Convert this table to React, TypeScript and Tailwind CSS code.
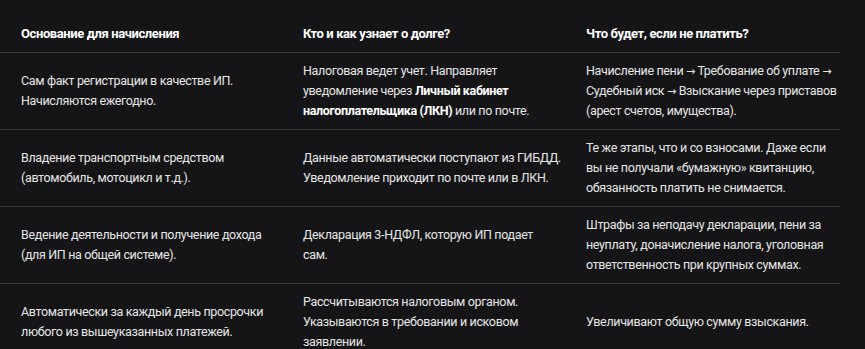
import { Fragment, type ReactNode } from "react";

type Row = { basis: ReactNode[]; who: ReactNode[]; result: ReactNode[] };

const Arrow = () => (
  <span className="font-['DejaVu_Sans',sans-serif] text-[11px] leading-none">→</span>
);

const rows: Row[] = [
  {
    basis: ["Сам факт регистрации в качестве ИП.", "Начисляются ежегодно."],
    who: [
      "Налоговая ведет учет. Направляет",
      <>
        уведомление через <b className="font-bold text-white">Личный кабинет</b>
      </>,
      <>
        <b className="font-bold text-white">налогоплательщика (ЛКН)</b> или по почте.
      </>,
    ],
    result: [
      <>
        Начисление пени <Arrow /> Требование об уплате <Arrow />
      </>,
      <>
        Судебный иск <Arrow /> Взыскание через приставов
      </>,
      "(арест счетов, имущества).",
    ],
  },
  {
    basis: ["Владение транспортным средством", "(автомобиль, мотоцикл и т.д.)."],
    who: ["Данные автоматически поступают из ГИБДД.", "Уведомление приходит по почте или в ЛКН."],
    result: [
      "Те же этапы, что и со взносами. Даже если",
      "вы не получали «бумажную» квитанцию,",
      "обязанность платить не снимается.",
    ],
  },
  {
    basis: ["Ведение деятельности и получение дохода", "(для ИП на общей системе)."],
    who: ["Декларация 3-НДФЛ, которую ИП подает", "сам."],
    result: [
      "Штрафы за неподачу декларации, пени за",
      "неуплату, доначисление налога, уголовная",
      "ответственность при крупных суммах.",
    ],
  },
  {
    basis: ["Автоматически за каждый день просрочки", "любого из вышеуказанных платежей."],
    who: ["Рассчитываются налоговым органом.", "Указываются в требовании и исковом", "заявлении."],
    result: ["Увеличивают общую сумму взыскания."],
  },
];

const cols = "grid grid-cols-[282px_283px_275px]";

function Cell({ lines }: { lines: ReactNode[] }) {
  return (
    <div className="flex items-center whitespace-nowrap py-2 pl-[21px]">
      <span>
        {lines.map((l, i) => (
          <Fragment key={i}>
            {i > 0 && <br />}
            {l}
          </Fragment>
        ))}
      </span>
    </div>
  );
}

export default function App() {
  return (
    <div className="min-h-screen overflow-hidden bg-[#151517] font-['Roboto',sans-serif] text-[12.5px] leading-[20px] tracking-[-0.35px] text-[#e6e6e6]">
      <h3 className="-mt-[26px] mb-[14px] pl-[21px] text-[20px] font-bold leading-[28px] text-white">
        Таблица: структура долгов ИП, уведомления и последствия
      </h3>
      <div className="w-[840px]">
        <div className={`${cols} border-b border-[#38383b] text-[13px] font-bold tracking-[-0.4px] text-white`}>
          <div className="py-2 pl-[21px]">Основание для начисления</div>
          <div className="py-2 pl-[21px]">Кто и как узнает о долге?</div>
          <div className="py-2 pl-[21px]">Что будет, если не платить?</div>
        </div>
        {rows.map((r, i) => (
          <div key={i} className={`${cols} border-b border-[#38383b]`}>
            <Cell lines={r.basis} />
            <Cell lines={r.who} />
            <Cell lines={r.result} />
          </div>
        ))}
      </div>
    </div>
  );
}
